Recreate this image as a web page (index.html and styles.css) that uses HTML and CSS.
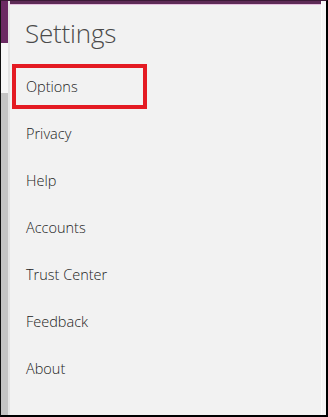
FILE: index.html
```html
<!DOCTYPE html>
<html>
<head>
<meta charset="utf-8">
<link rel="stylesheet" href="styles.css">
</head>
<body>
<div class="frame">
  <div class="strip">
    <div class="strip-purple"></div>
    <div class="strip-white"></div>
    <div class="strip-grey"></div>
  </div>
  <div class="strip-edge"></div>
  <div class="panel">
    <div class="topbar"></div>
    <div class="topline"></div>
    <div class="content">
      <h1 class="title">Settings</h1>
      <ul class="menu">
        <li class="item selected">Options</li>
        <li class="item">Privacy</li>
        <li class="item">Help</li>
        <li class="item">Accounts</li>
        <li class="item">Trust Center</li>
        <li class="item">Feedback</li>
        <li class="item">About</li>
      </ul>
    </div>
  </div>
  <div class="right-edge"></div>
</div>
</body>
</html>
```
FILE: styles.css
```css
html, body {
  margin: 0;
  padding: 0;
  width: 328px;
  height: 417px;
  overflow: hidden;
  background: #000;
}
.frame {
  box-sizing: border-box;
  width: 328px;
  height: 417px;
  border-left: 1px solid #111;
  border-top: 1px solid #3c1a37;
  border-right: 2px solid #000;
  border-bottom: 2px solid #000;
  display: flex;
  background: #f2f2f2;
}
.strip {
  width: 7px;
  display: flex;
  flex-direction: column;
}
.strip-purple {
  height: 42px;
  background: #6b2a63;
}
.strip-white {
  height: 50px;
  background: #f7f7f7;
}
.strip-grey {
  flex: 1;
  background: #c4c4c4;
}
.strip-edge {
  width: 2px;
  background: #e4e4e4;
}
.panel {
  flex: 1;
  display: flex;
  flex-direction: column;
  background: #f2f2f2;
}
.topbar {
  height: 3px;
  background: #5e2c57;
}
.topline {
  height: 1px;
  background: #e6bfe0;
}
.content {
  flex: 1;
  padding-left: 2px;
}
.title {
  margin: 0;
  padding-left: 13px;
  font-family: "Open Sans", "Noto Sans", sans-serif;
  font-weight: 300;
  font-size: 26px;
  line-height: 36px;
  padding-top: 10px;
  color: #4a4a4a;
  letter-spacing: -0.2px;
}
.menu {
  list-style: none;
  margin: 13px 0 0 0;
  padding: 0;
}
.item {
  box-sizing: border-box;
  height: 47px;
  display: flex;
  align-items: center;
  padding-left: 14px;
  padding-bottom: 2px;
  font-family: "Open Sans", "Noto Sans", sans-serif;
  font-weight: 300;
  font-size: 14.5px;
  color: #222;
}
.item.selected {
  width: 135px;
  height: 45px;
  margin-bottom: 2px;
  border: 4px solid #e41b23;
  padding-left: 10px;
  padding-bottom: 1px;
}
.right-edge {
  width: 5px;
  background: #f6f6f6;
  border-left: 1px solid #fdfdfd;
  box-sizing: border-box;
}
```
